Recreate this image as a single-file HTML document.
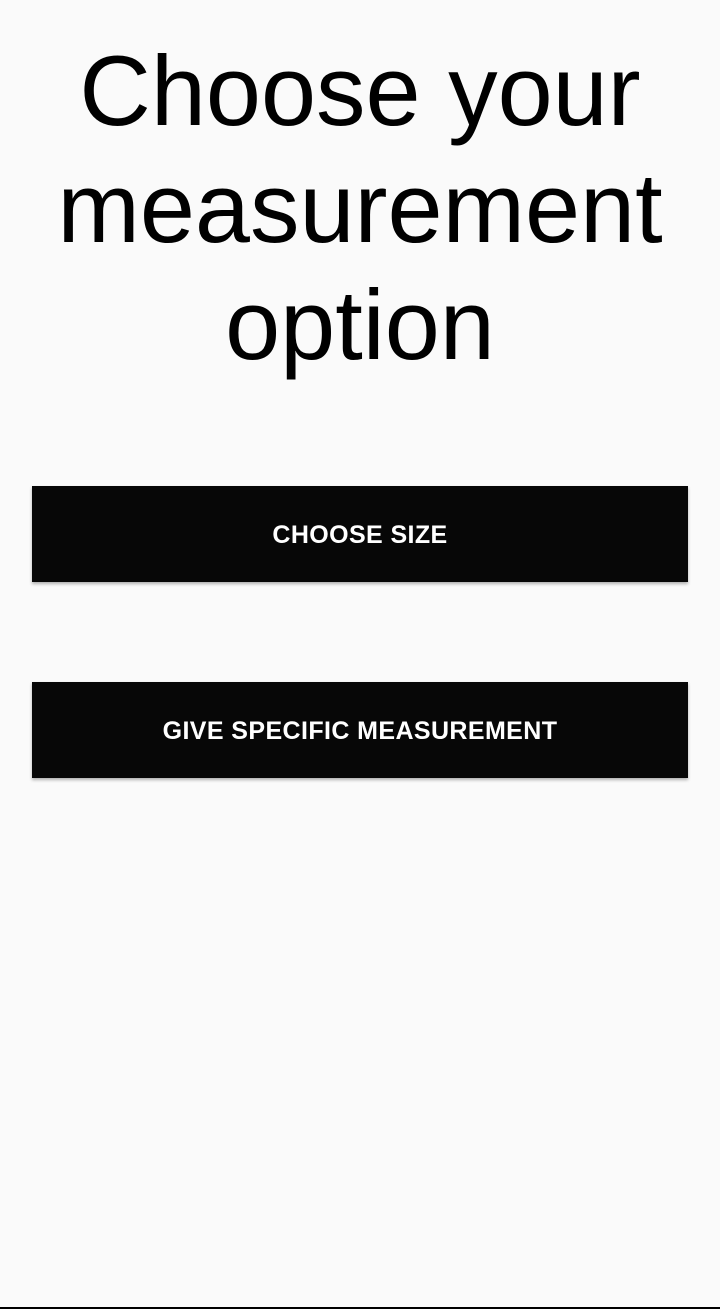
<!DOCTYPE html>
<html><head><style>
html,body{margin:0;padding:0;}
body{width:720px;height:1309px;background:#fafafa;position:relative;overflow:hidden;font-family:"Liberation Sans",sans-serif;}
h1{position:absolute;top:32px;left:0;width:720px;margin:0;text-align:center;font-weight:normal;font-size:99px;line-height:117px;color:#000;}
.btn{position:absolute;left:32px;width:656px;height:96px;background:#070707;color:#fff;text-align:center;line-height:99px;font-size:25px;font-weight:bold;letter-spacing:0.4px;box-shadow:0 2px 3px rgba(0,0,0,0.3);}
.line{position:absolute;left:0;top:1307px;width:720px;height:2px;background:#000;}
</style></head><body>
<h1>Choose your<br>measurement<br>option</h1>
<div class="btn" style="top:486px">CHOOSE SIZE</div>
<div class="btn" style="top:682px">GIVE SPECIFIC MEASUREMENT</div>
<div class="line"></div>
</body></html>
